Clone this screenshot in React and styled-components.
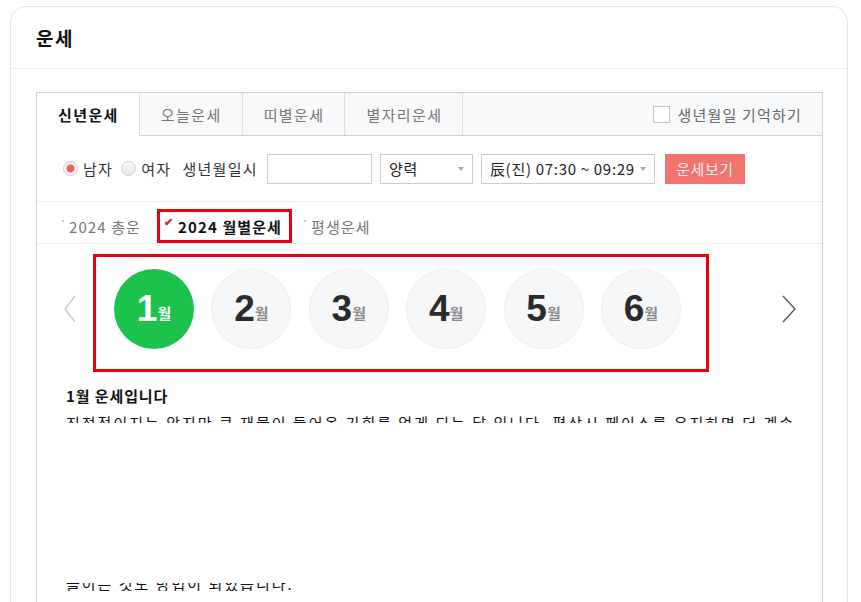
import React from "react";
import styled, { createGlobalStyle } from "styled-components";

const GlobalStyle = createGlobalStyle`
  body {
    margin: 0;
    background: #fff;
    font-family: "Noto Sans CJK KR", "Noto Sans", sans-serif;
    color: #222;
  }
`;

const months = [1, 2, 3, 4, 5, 6];

const App = () => {
  return (
    <Page>
      <GlobalStyle />
      <Card>
        <CardHeader>운세</CardHeader>
        <CardBody>
          <Panel>
            <TabBar>
              <Tab $active>신년운세</Tab>
              <Tab>오늘운세</Tab>
              <Tab>띠별운세</Tab>
              <Tab>별자리운세</Tab>
              <Remember>
                <CheckBox />
                생년월일 기억하기
              </Remember>
            </TabBar>

            <FormRow>
              <RadioLabel>
                <Radio $checked />
                남자
              </RadioLabel>
              <RadioLabel>
                <Radio />
                여자
              </RadioLabel>
              <FieldLabel>생년월일시</FieldLabel>
              <DateInput />
              <Select $w={93}>
                양력
                <Caret />
              </Select>
              <Select $w={174}>
                辰(진) 07:30 ~ 09:29
                <Caret />
              </Select>
              <SubmitButton>운세보기</SubmitButton>
            </FormRow>

            <SubTabs>
              <SubTab>
                <Dot />
                2024 총운
              </SubTab>
              <SubTab $active>
                <Check>✔</Check>
                2024 월별운세
              </SubTab>
              <SubTab>
                <Dot />
                평생운세
              </SubTab>
            </SubTabs>

            <Slider>
              <Arrow>
                <svg width="12" height="28" viewBox="0 0 12 28">
                  <path d="M11 1 L1 14 L11 27" fill="none" stroke="#c9c9c9" strokeWidth="1.3" />
                </svg>
              </Arrow>
              <MonthBox>
                {months.map((m) => (
                  <MonthCircle key={m} $active={m === 1}>
                    <MonthNum $active={m === 1}>{m}</MonthNum>
                    <MonthUnit $active={m === 1}>월</MonthUnit>
                  </MonthCircle>
                ))}
              </MonthBox>
              <Arrow $right>
                <svg width="14" height="28" viewBox="0 0 14 28">
                  <path d="M1 1 L13 14 L1 27" fill="none" stroke="#555" strokeWidth="1.3" />
                </svg>
              </Arrow>
            </Slider>

            <Result>
              <ResultTitle>1월 운세입니다</ResultTitle>
              <TopClip>
                <span>진전적이지는 않지만 큰 재물이 들어올 기회를 얻게 되는 달 입니다. 평상시 페이스를 유지하면 더 계속</span>
              </TopClip>
              <Hidden />
              <BottomClip>
                <span>들이는 것도 방법이 되었습니다.</span>
              </BottomClip>
            </Result>
          </Panel>
        </CardBody>
      </Card>
    </Page>
  );
};

const Page = styled.div`
  padding: 6px 13px 0 10px;
  height: 596px;
  overflow: hidden;
`;

const Card = styled.div`
  border: 1px solid #e6e6e6;
  border-bottom: none;
  border-radius: 16px 16px 0 0;
  height: 620px;
`;

const CardHeader = styled.div`
  height: 61px;
  display: flex;
  align-items: center;
  padding-left: 25px;
  font-size: 19px;
  font-weight: 700;
  letter-spacing: 1.5px;
  color: #111;
  border-bottom: 1px solid #eeeeee;
`;

const CardBody = styled.div`
  padding: 23px 24px 0 25px;
`;

const Panel = styled.div`
  border: 1px solid #cdd2d6;
  border-bottom: none;
  height: 560px;
`;

const TabBar = styled.div`
  display: flex;
  height: 42px;
  background: #f7f9fb;
  border-bottom: 1px solid #cdd2d6;
`;

const Tab = styled.div`
  display: flex;
  align-items: center;
  padding: 0 20px 0 21px;
  font-size: 15px;
  letter-spacing: 1.4px;
  color: ${(p) => (p.$active ? "#111" : "#777")};
  font-weight: ${(p) => (p.$active ? 700 : 400)};
  background: ${(p) => (p.$active ? "#fff" : "transparent")};
  border-right: 1px solid #dde1e5;
  height: ${(p) => (p.$active ? "43px" : "42px")};
`;

const Remember = styled.label`
  margin-left: auto;
  margin-right: 20px;
  display: flex;
  align-items: center;
  gap: 7px;
  font-size: 15px;
  letter-spacing: 1.2px;
  color: #666;
`;

const CheckBox = styled.span`
  width: 15px;
  height: 15px;
  border: 1px solid #c4c4c4;
  background: #fff;
`;

const FormRow = styled.div`
  height: 65px;
  display: flex;
  align-items: center;
  padding-left: 26px;
  font-size: 15px;
  letter-spacing: 1.3px;
  color: #333;
  border-bottom: 1px solid #eeeeee;
`;

const RadioLabel = styled.label`
  display: flex;
  align-items: center;
  gap: 5px;
  margin-right: 8px;
`;

const Radio = styled.span`
  width: 13px;
  height: 13px;
  border-radius: 50%;
  border: 1px solid #cfcfcf;
  background: ${(p) =>
    p.$checked
      ? "radial-gradient(circle, #f0605c 0 3.5px, #f4f4f4 4.5px)"
      : "linear-gradient(#fafafa, #e6e6e6)"};
`;

const FieldLabel = styled.span`
  margin: 0 9px 0 3px;
`;

const DateInput = styled.div`
  width: 103px;
  height: 28px;
  border: 1px solid #cccccc;
  margin-right: 8px;
`;

const Select = styled.div`
  position: relative;
  width: ${(p) => p.$w - 10}px;
  height: 28px;
  border: 1px solid #cccccc;
  padding-left: 8px;
  display: flex;
  align-items: center;
  margin-right: 8px;
  color: #222;
  font-size: 15px;
  letter-spacing: 0.7px;
`;

const Caret = styled.span`
  position: absolute;
  right: 8px;
  top: 12px;
  border-left: 3px solid transparent;
  border-right: 3px solid transparent;
  border-top: 4px solid #aaa;
`;

const SubmitButton = styled.button`
  width: 80px;
  height: 30px;
  margin-left: 2px;
  border: none;
  background: #f3736f;
  color: #fde8e7;
  font-family: inherit;
  font-size: 15px;
  letter-spacing: 0.5px;
`;

const SubTabs = styled.div`
  height: 41px;
  display: flex;
  align-items: flex-end;
  padding-left: 25px;
  border-bottom: 1px solid #eeeeee;
`;

const SubTab = styled.div`
  display: flex;
  align-items: center;
  height: ${(p) => (p.$active ? "28px" : "34px")};
  font-size: 15px;
  letter-spacing: 1.1px;
  color: ${(p) => (p.$active ? "#111" : "#777")};
  font-weight: ${(p) => (p.$active ? 700 : 400)};
  border: ${(p) => (p.$active ? "3px solid #e60012" : "none")};
  padding: ${(p) => (p.$active ? "0 7px 0 4px" : "0")};
  margin-right: ${(p) => (p.$active ? "12px" : "16px")};
`;

const Dot = styled.span`
  width: 2px;
  height: 2px;
  border-radius: 50%;
  background: #bbb;
  margin: 0 5px 10px 0;
`;

const Check = styled.span`
  color: #e0202e;
  font-size: 11px;
  margin: 0 4px 10px 0;
`;

const Slider = styled.div`
  display: flex;
  align-items: center;
  padding: 10px 26px 0 27px;
  height: 118px;
`;

const Arrow = styled.div`
  display: flex;
  margin-right: ${(p) => (p.$right ? "0" : "17px")};
  margin-left: ${(p) => (p.$right ? "auto" : "0")};
  margin-top: -8px;
`;

const MonthBox = styled.div`
  display: flex;
  gap: 17.4px;
  padding: 12px 24px 20px 18px;
  border: 3px solid #e8000b;
  width: 568px;
`;

const MonthCircle = styled.div`
  width: 80px;
  height: 80px;
  border-radius: 50%;
  display: flex;
  align-items: center;
  justify-content: center;
  background: ${(p) => (p.$active ? "#1cc24b" : "#f6f7f8")};
  box-shadow: ${(p) => (p.$active ? "none" : "inset 0 0 0 1px #eff0f1")};
  font-family: "Liberation Sans", Arial, sans-serif;
`;

const MonthNum = styled.span`
  font-size: 37px;
  font-weight: 700;
  letter-spacing: -1px;
  color: ${(p) => (p.$active ? "#fff" : "#2b2b2b")};
`;

const MonthUnit = styled.span`
  font-family: "Noto Sans CJK KR", sans-serif;
  font-size: 15px;
  font-weight: 700;
  margin: 6px 0 0 1px;
  color: ${(p) => (p.$active ? "#fff" : "#8a8a8a")};
`;

const Result = styled.div`
  padding: 13px 29px 0 29px;
  color: #111;
`;

const ResultTitle = styled.div`
  font-size: 15px;
  font-weight: 700;
  letter-spacing: 0.9px;
  height: 22px;
  line-height: 22px;
`;

const TopClip = styled.div`
  margin-top: 8px;
  height: 8px;
  overflow: hidden;
  white-space: nowrap;
  font-size: 15px;
  line-height: 15px;
  letter-spacing: 2px;
`;

const Hidden = styled.div`
  height: 160px;
`;

const BottomClip = styled.div`
  height: 8px;
  overflow: hidden;
  display: flex;
  align-items: flex-end;
  white-space: nowrap;
  font-size: 15px;
  line-height: 15px;
  letter-spacing: 2px;
`;

export default App;
